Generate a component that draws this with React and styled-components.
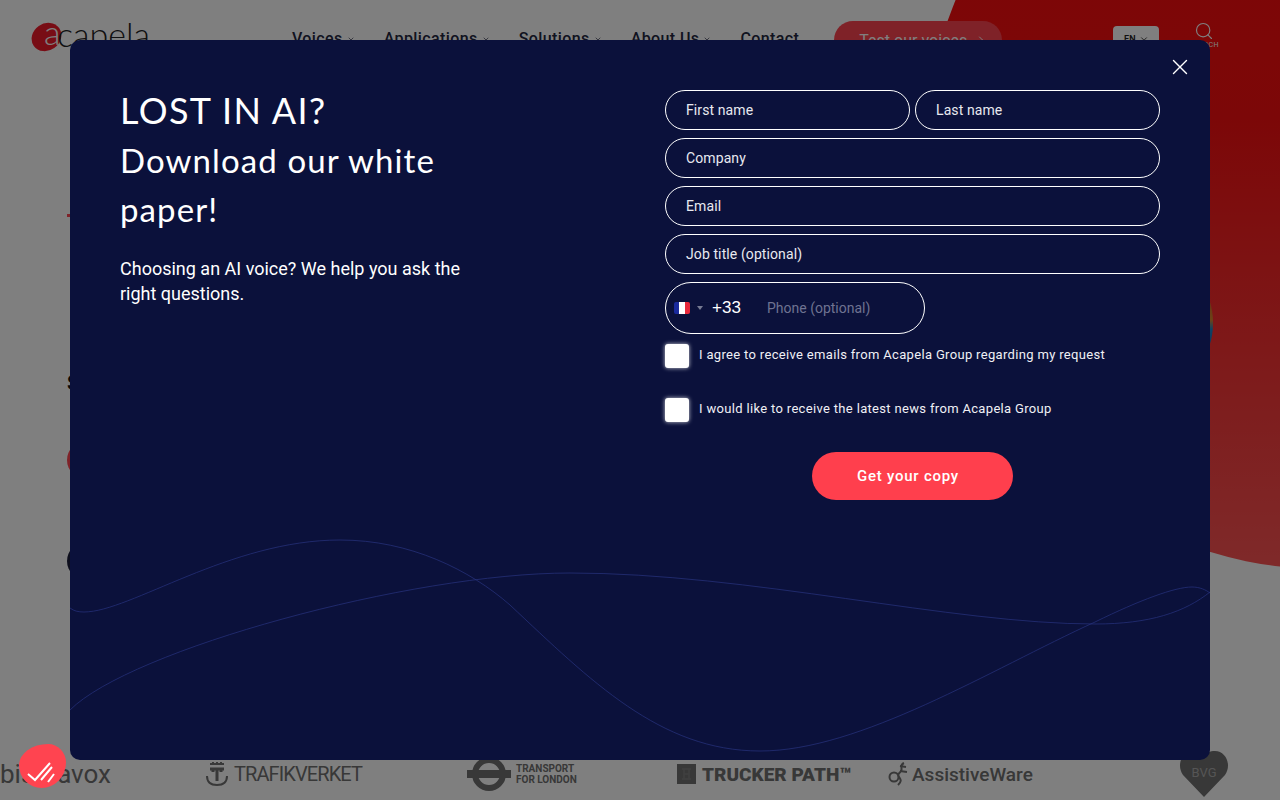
import styled, { createGlobalStyle } from 'styled-components';
import { ChevronDown, ChevronRight, Search, X } from 'lucide-react';

const GlobalStyle = createGlobalStyle`
    html, body {
        margin: 0;
        height: 100%;
        overflow: hidden;
        background: #fff;
        font-family: "Roboto", "Liberation Sans", sans-serif;
    }
`;

const Page = styled.div`
    position: relative;
    width: 1280px;
    height: 800px;
    overflow: hidden;
    display: flex;
    flex-direction: column;
    background: #fff;
`;

const RedBlob = styled.div`
    position: absolute;
    left: 924px;
    top: -250px;
    width: 800px;
    height: 819px;
    border-radius: 50%;
    background: linear-gradient(180deg, #ff0a0a 0%, #f90f10 45%, #ff5454 100%);
`;

const Header = styled.header`
    position: relative;
    flex: none;
    display: flex;
    align-items: flex-start;
    height: 70px;
    padding: 21px 0 0 31px;
    box-sizing: border-box;
`;

const Logo = styled.div`
    display: flex;
    align-items: center;
    width: 261px;
    height: 32px;
`;

const LogoWord = styled.span`
    margin: -6px 0 0 -8px;
    font-family: "Lato", sans-serif;
    font-size: 34px;
    font-weight: 300;
    line-height: 32px;
    color: #222;
`;

const Nav = styled.nav`
    display: flex;
    gap: 29px;
    padding-top: 8px;
`;

const NavLink = styled.span`
    display: flex;
    align-items: center;
    gap: 4px;
    font-size: 16px;
    font-weight: 500;
    line-height: 20px;
    letter-spacing: 0.4px;
    color: #22263f;
`;

const TestButton = styled.span`
    display: flex;
    align-items: center;
    gap: 8px;
    width: 168px;
    height: 38px;
    box-sizing: border-box;
    margin-left: 35px;
    padding-left: 25px;
    border-radius: 19px;
    background: #ff4450;
    color: #fff;
    font-size: 16px;
`;

const LangBox = styled.span`
    display: flex;
    align-items: center;
    justify-content: center;
    gap: 3px;
    width: 46px;
    height: 26px;
    margin: 5px 0 0 111px;
    border-radius: 4px;
    background: #fff;
    font-size: 9px;
    font-weight: 600;
    color: #222;
`;

const SearchBox = styled.span`
    display: flex;
    flex-direction: column;
    align-items: center;
    width: 30px;
    margin-left: 30px;
    color: #fff;
    font-size: 7px;
    letter-spacing: 0.5px;
`;

const Hero = styled.section`
    position: relative;
    flex: 1;
    padding: 144px 0 0 67px;
`;

const AccentDash = styled.div`
    width: 20px;
    height: 3px;
    background: #ff4450;
`;

const HeroHeading = styled.div`
    margin-top: 154px;
    font-size: 20px;
    font-weight: 600;
    line-height: 24px;
    color: #111;
`;

const Dot = styled.div`
    width: 38px;
    height: 38px;
    margin-top: ${p => p.$top}px;
    border-radius: 50%;
    background: ${p => p.$color};
`;

const Illustration = styled.div`
    position: absolute;
    left: 1190px;
    top: 222px;
    width: 23px;
    height: 62px;
    border-radius: 50%;
    background: linear-gradient(180deg, #c9572b 0%, #d9862f 45%, #1a86c9 60%, #1a5fa8 100%);
`;

const Logos = styled.div`
    position: relative;
    flex: none;
    height: 50px;
    box-sizing: border-box;
    padding-bottom: 3px;
    display: grid;
    grid-template-columns: 205px 262px 210px 211px 291px 101px;
    align-items: center;
`;

const Brand = styled.div`
    display: flex;
    align-items: center;
    gap: ${p => p.$gap || 5}px;
    color: #707070;
    white-space: nowrap;
`;

const BrandText = styled.span`
    font-family: ${p => p.$font || '"Roboto", sans-serif'};
    font-size: ${p => p.$size}px;
    font-weight: ${p => p.$weight || 400};
    letter-spacing: ${p => p.$spacing || 0}px;
    line-height: ${p => p.$leading || 1};
    color: #707070;
`;

const Overlay = styled.div`
    position: absolute;
    inset: 0;
    background: rgba(0, 0, 0, 0.5);
`;

const Modal = styled.div`
    position: absolute;
    left: 70px;
    top: 40px;
    width: 1140px;
    height: 720px;
    box-sizing: border-box;
    padding: 50px;
    display: flex;
    border-radius: 10px;
    overflow: hidden;
    background: #0b113b;
    color: #fff;
`;

const Waves = styled.svg`
    position: absolute;
    left: 0;
    top: 0;
    pointer-events: none;
`;

const CloseButton = styled.button`
    position: absolute;
    top: 14px;
    right: 17px;
    width: 26px;
    height: 26px;
    padding: 0;
    border: 0;
    background: none;
    color: #fff;
`;

const Intro = styled.div`
    position: relative;
    width: 545px;
    flex: none;
`;

const Title = styled.h2`
    margin: -4px 0 22px;
    width: 400px;
    font-family: "Lato", sans-serif;
    font-size: 33px;
    font-weight: 400;
    line-height: 49px;
    letter-spacing: 1.1px;
`;

const TitleCaps = styled.span`
    font-size: 36px;
    letter-spacing: 1.4px;
`;

const Lead = styled.p`
    margin: 0;
    width: 360px;
    font-size: 18px;
    line-height: 25px;
`;

const Form = styled.form`
    position: relative;
    width: 495px;
    display: flex;
    flex-direction: column;
    gap: 8px;
`;

const Row = styled.div`
    display: flex;
    gap: 5px;
`;

const Field = styled.div`
    flex: ${p => (p.$half ? 1 : 'none')};
    height: 40px;
    box-sizing: border-box;
    padding-left: 20px;
    display: flex;
    align-items: center;
    border: 1px solid #fff;
    border-radius: 20px;
    font-size: 14px;
    letter-spacing: 0.1px;
    color: #e8e9f0;
`;

const PhoneField = styled.div`
    width: 260px;
    height: 52px;
    box-sizing: border-box;
    padding-left: 8px;
    display: flex;
    align-items: center;
    border: 1px solid #fff;
    border-radius: 26px;
`;

const Flag = styled.span`
    width: 16px;
    height: 12px;
    border-radius: 2px;
    background: linear-gradient(90deg, #1a2a9c 0 33%, #fff 33% 66%, #e8283c 66%);
`;

const Caret = styled.span`
    width: 0;
    height: 0;
    margin: 0 9px 0 7px;
    border: 3px solid transparent;
    border-top: 4px solid #777b93;
    border-bottom: 0;
`;

const Dial = styled.span`
    width: 55px;
    font-family: "Liberation Sans", sans-serif;
    font-size: 17px;
    color: #fff;
`;

const Placeholder = styled.span`
    font-size: 14px;
    color: #6f7391;
`;

const Consent = styled.label`
    display: flex;
    align-items: flex-start;
    gap: 10px;
    height: 24px;
    margin-top: ${p => p.$top}px;
    font-size: 13px;
    line-height: 22px;
    letter-spacing: 0.33px;
    color: #f0f0f5;
`;

const Box = styled.span`
    width: 24px;
    height: 24px;
    border-radius: 3px;
    background: #fff;
    box-shadow: 0 0 4px rgba(255, 255, 255, 0.8);
`;

const Submit = styled.button`
    align-self: center;
    width: 201px;
    height: 48px;
    margin-top: 22px;
    padding: 0 9px 0 0;
    border: 0;
    border-radius: 24px;
    background: #ff3f4d;
    color: #fff;
    font-family: inherit;
    font-size: 15px;
    font-weight: 500;
    letter-spacing: 0.75px;
`;

const FloatBadge = styled.div`
    position: absolute;
    left: 19px;
    top: 744px;
    width: 47px;
    height: 44px;
    border-radius: 62% 38% 52% 48% / 48% 42% 58% 52%;
    background: #ff4450;
`;

function App() {
    return (
        <>
            <GlobalStyle />
            <Page>
                <RedBlob />
                <Header>
                    <Logo>
                        <svg width="34" height="32" viewBox="0 0 34 32">
                            <ellipse cx="15.5" cy="16" rx="15.5" ry="13.5" transform="rotate(-35 15.5 16)" fill="#f01a2a" />
                            <text x="13" y="24" fontFamily="Lato" fontSize="34" fontWeight="300" fill="#fff">a</text>
                        </svg>
                        <LogoWord>capela</LogoWord>
                    </Logo>
                    <Nav>
                        <NavLink>Voices <ChevronDown size={8} /></NavLink>
                        <NavLink>Applications <ChevronDown size={8} /></NavLink>
                        <NavLink>Solutions <ChevronDown size={8} /></NavLink>
                        <NavLink>About Us <ChevronDown size={8} /></NavLink>
                        <NavLink>Contact</NavLink>
                    </Nav>
                    <TestButton>Test our voices <ChevronRight size={12} /></TestButton>
                    <LangBox>EN <ChevronDown size={10} /></LangBox>
                    <SearchBox><Search size={20} strokeWidth={1.4} />SEARCH</SearchBox>
                </Header>
                <Hero>
                    <AccentDash />
                    <HeroHeading>Speech</HeroHeading>
                    <Dot $top={46} $color="#ff4450" />
                    <Dot $top={63} $color="#1a1d3a" />
                    <Illustration />
                </Hero>
                <Logos>
                    <Brand>
                        <BrandText $size={26}>bismavox</BrandText>
                    </Brand>
                    <Brand>
                        <svg width="24" height="26" viewBox="0 0 24 26" fill="none" stroke="#707070" strokeWidth="2">
                            <path d="M5 3h14M8 1v3M12 1v3M16 1v3" />
                            <path d="M5 8h14M12 8v12M8 8v3M16 8v3" strokeWidth="3" />
                            <path d="M2 15c0 6 4 9 10 9s10-3 10-9" />
                        </svg>
                        <BrandText $size={20} $spacing={-0.9}>TRAFIKVERKET</BrandText>
                    </Brand>
                    <Brand>
                        <svg width="44" height="36" viewBox="0 0 44 36" fill="none">
                            <circle cx="22" cy="18" r="14" stroke="#707070" strokeWidth="6" />
                            <rect x="0" y="14" width="44" height="8" fill="#707070" />
                        </svg>
                        <BrandText $size={10} $weight={700} $leading={1.1}>TRANSPORT<br />FOR LONDON</BrandText>
                    </Brand>
                    <Brand $gap={6}>
                        <svg width="19" height="20" viewBox="0 0 19 20">
                            <rect width="19" height="20" fill="#707070" />
                            <path d="M5 5h9M5 15h9M7 5v10M12 5v10M7 10h5" stroke="#808080" strokeWidth="1.5" />
                        </svg>
                        <BrandText $size={19} $weight={900}>TRUCKER PATH™</BrandText>
                    </Brand>
                    <Brand $gap={3}>
                        <svg width="21" height="26" viewBox="0 0 21 26" fill="none" stroke="#707070" strokeWidth="2">
                            <circle cx="6" cy="16" r="4.5" />
                            <path d="M16 2c-5 2-1 5-3 8s-4 3-2 6 3 4-1 8" />
                            <path d="M12 5l6 1M12 10l7 1" />
                        </svg>
                        <BrandText $size={19} $weight={500}>AssistiveWare</BrandText>
                    </Brand>
                    <Brand>
                        <svg width="50" height="48" viewBox="0 0 50 48">
                            <path d="M25 47L4 25C-3 15 3 1 14 1c5 0 9 2 11 5 2-3 6-5 11-5 11 0 17 14 10 24z" fill="#707070" />
                            <text x="25" y="27" textAnchor="middle" fontFamily="Roboto" fontSize="13" fill="#aaa">BVG</text>
                        </svg>
                    </Brand>
                </Logos>
                <Overlay />
                <Modal>
                    <Waves width="1140" height="720" viewBox="0 0 1140 720" fill="none" stroke="#28347f" strokeWidth="0.7">
                        <path d="M0 568C4 571 8 572 14 572C60 572 160 500 270 500C340 500 400 530 440 565C520 640 590 711 690 711C790 711 920 630 1025 582C1070 560 1105 547 1122 547C1130 547 1136 550 1140 553" />
                        <path d="M0 670C60 610 340 533 500 533C680 533 880 584 1025 584C1080 584 1115 572 1140 552" />
                    </Waves>
                    <CloseButton type="button"><X size={26} strokeWidth={1.3} /></CloseButton>
                    <Intro>
                        <Title><TitleCaps>LOST IN AI?</TitleCaps><br />Download our white paper!</Title>
                        <Lead>Choosing an AI voice? We help you ask the right questions.</Lead>
                    </Intro>
                    <Form>
                        <Row>
                            <Field $half>First name</Field>
                            <Field $half>Last name</Field>
                        </Row>
                        <Field>Company</Field>
                        <Field>Email</Field>
                        <Field>Job title (optional)</Field>
                        <PhoneField>
                            <Flag /><Caret /><Dial>+33</Dial>
                            <Placeholder>Phone (optional)</Placeholder>
                        </PhoneField>
                        <Consent $top={2}><Box />I agree to receive emails from Acapela Group regarding my request</Consent>
                        <Consent $top={22}><Box />I would like to receive the latest news from Acapela Group</Consent>
                        <Submit type="button">Get your copy</Submit>
                    </Form>
                </Modal>
                <FloatBadge>
                    <svg width="47" height="44" viewBox="0 0 47 44" fill="none" stroke="#fff" strokeWidth="2">
                        <path d="M9 30l7 6L31 19" />
                        <path d="M22 36l11-13M29 38l6-8" />
                    </svg>
                </FloatBadge>
            </Page>
        </>
    );
}

export default App;
